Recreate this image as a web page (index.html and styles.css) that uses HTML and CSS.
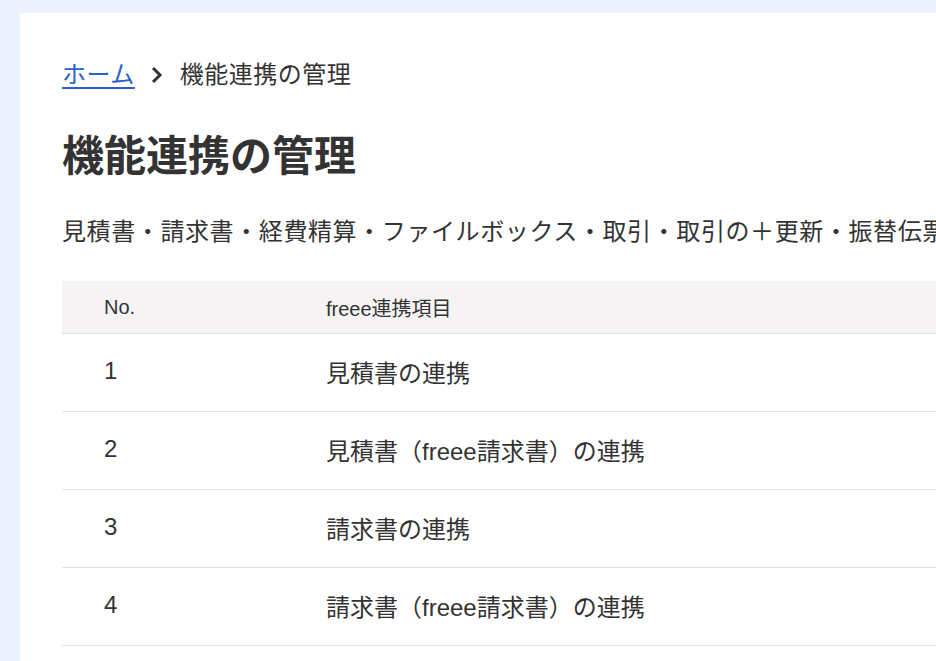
FILE: index.html
```
<!DOCTYPE html>
<html lang="ja">
<head>
    <meta charset="UTF-8">
    <meta name="viewport" content="width=device-width, initial-scale=1.0">
    <title>機能連携の管理</title>
    <link rel="stylesheet" href="styles.css">
</head>
<body>
<div class="card">
    <nav class="crumb">
        <a href="#">ホーム</a>
        <svg class="crumb-sep" width="16" height="20" viewBox="0 0 16 20"><path d="M4 3 L11 10 L4 17" fill="none" stroke="#333" stroke-width="3"/></svg>
        <span>機能連携の管理</span>
    </nav>

    <h1>機能連携の管理</h1>
    <p class="lead">見積書・請求書・経費精算・ファイルボックス・取引・取引の＋更新・振替伝票・口座・勘定科目の連携を管理します</p>

    <table class="list">
        <thead>
            <tr><th class="no">No.</th><th>freee連携項目</th></tr>
        </thead>
        <tbody>
            <tr><td class="no">1</td><td>見積書の連携</td></tr>
            <tr><td class="no">2</td><td>見積書（freee請求書）の連携</td></tr>
            <tr><td class="no">3</td><td>請求書の連携</td></tr>
            <tr><td class="no">4</td><td>請求書（freee請求書）の連携</td></tr>
        </tbody>
    </table>
</div>
</body>
</html>
```

FILE: styles.css
```
html, body {margin: 0; height: 100%;}
body {background: #ebf2fd; overflow: hidden; font-family: "Liberation Sans", "Noto Sans CJK JP", sans-serif; color: #333;}
.card {background: #fff; margin: 13px 0 0 20px; padding: 44px 0 0 42px; width: 1400px; min-height: 800px;}

.crumb {display: flex; align-items: center; font-size: 24px; line-height: 36px; white-space: nowrap; letter-spacing: 0.5px;}
.crumb a {color: #2a62c9; text-decoration: underline; text-underline-offset: 4px;}
.crumb-sep {margin: 0 15px 0 14px;}

h1 {margin: 32px 0 0; font-size: 42px; line-height: 63px; font-weight: bold;}
.lead {margin: 26px 0 0; font-size: 24px; line-height: 36px; white-space: nowrap; letter-spacing: 0.6px;}

.list {margin-top: 31px; border-collapse: collapse; width: 1300px;}
.list th {background: #f5f3f3; font-size: 20px; font-weight: normal; text-align: left; height: 52px; padding: 0; border-bottom: 1px solid #e3e3e3;}
.list td {font-size: 24px; height: 74px; padding: 0 0 3px; border-bottom: 1px solid #e3e3e3;}
.list .no {width: 222px; padding-left: 42px;}
```
